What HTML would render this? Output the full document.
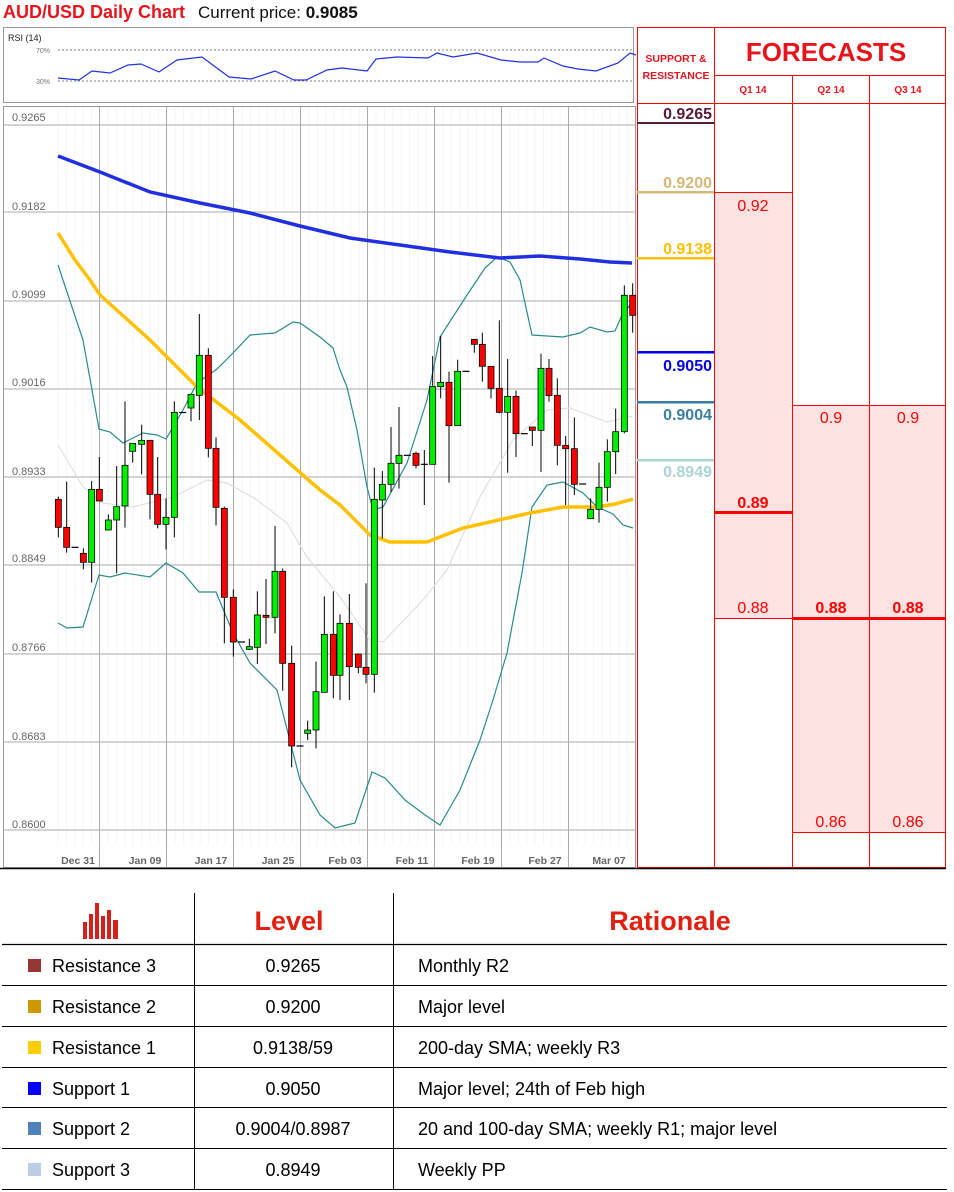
<!DOCTYPE html>
<html><head><meta charset="utf-8"><style>
html,body{margin:0;padding:0;background:#fff;width:954px;height:1192px;overflow:hidden}
svg{display:block}
text{font-family:"Liberation Sans",sans-serif}
</style></head><body>
<svg id="s" width="954" height="1192" xmlns="http://www.w3.org/2000/svg">
<text x="3" y="18" font-size="18" font-weight="bold" fill="#e8141c">AUD/USD Daily Chart</text>
<text x="198" y="18" font-size="17" fill="#111">Current price: <tspan font-weight="bold">0.9085</tspan></text>

<rect x="3.5" y="27.5" width="630" height="75" fill="#fff" stroke="#999"/>
<text x="8" y="41" font-size="9" fill="#222">RSI (14)</text>
<text x="36" y="53" font-size="7" fill="#777">70%</text>
<text x="36" y="84" font-size="7" fill="#777">30%</text>
<line x1="58" y1="50" x2="634" y2="50" stroke="#555" stroke-dasharray="2,2" stroke-width="0.8"/>
<line x1="58" y1="81" x2="634" y2="81" stroke="#555" stroke-dasharray="2,2" stroke-width="0.8"/>
<polyline fill="none" stroke="#2030e0" stroke-width="1.2" points="58,78 79,80 92,71 110,73 128,65 141,64 159,72 177,60 202,57 229,77 251,79 275,71 294,80 306,80 327,70 342,68 367,71 376,59 397,57 428,58 437,53 453,57 477,53 501,60 520,62 538,62 544,58 563,66 578,69 596,71 618,63 630,53 636,55"/>

<rect x="3.5" y="106.5" width="632" height="761" fill="#fff" stroke="#999"/>
<g id="minor"></g>
<g stroke="#aaa" stroke-width="1">
<line x1="3" y1="125" x2="635" y2="125"/><line x1="3" y1="212" x2="635" y2="212"/><line x1="3" y1="301" x2="635" y2="301"/><line x1="3" y1="389" x2="635" y2="389"/><line x1="3" y1="477" x2="635" y2="477"/><line x1="3" y1="565" x2="635" y2="565"/><line x1="3" y1="654" x2="635" y2="654"/><line x1="3" y1="742" x2="635" y2="742"/><line x1="3" y1="830" x2="635" y2="830"/>
<line x1="99.5" y1="107" x2="99.5" y2="868"/><line x1="166.5" y1="107" x2="166.5" y2="868"/><line x1="233.5" y1="107" x2="233.5" y2="868"/><line x1="300.5" y1="107" x2="300.5" y2="868"/><line x1="367.5" y1="107" x2="367.5" y2="868"/><line x1="434.5" y1="107" x2="434.5" y2="868"/><line x1="501.5" y1="107" x2="501.5" y2="868"/><line x1="568.5" y1="107" x2="568.5" y2="868"/>
</g>
<g font-size="11" fill="#666">
<text x="12" y="121">0.9265</text><text x="12" y="210">0.9182</text><text x="12" y="298">0.9099</text><text x="12" y="386">0.9016</text><text x="12" y="475">0.8933</text><text x="12" y="562">0.8849</text><text x="12" y="651">0.8766</text><text x="12" y="740">0.8683</text><text x="12" y="828">0.8600</text>
</g>
<g font-size="10.5" font-weight="bold" fill="#666" text-anchor="middle">
<text x="78" y="864">Dec 31</text><text x="145" y="864">Jan 09</text><text x="211" y="864">Jan 17</text><text x="278" y="864">Jan 25</text><text x="345" y="864">Feb 03</text><text x="412" y="864">Feb 11</text><text x="478" y="864">Feb 19</text><text x="545" y="864">Feb 27</text><text x="609" y="864">Mar 07</text>
</g>
<polyline fill="none" stroke="#e0e0e0" stroke-width="1.2" points="58,445 83,487 103,503 133,507 173,497 207,480 227,483 257,500 287,523 307,557 340,597 370,640 383,642 423,600 447,570 480,497 513,440 547,410 570,408 607,422 633,416"/>
<polyline fill="none" stroke="#2a8a8a" stroke-width="1.2" points="58,265 63,280 83,340 92,390 99,429 110,432 123,443 143,433 157,435 166,439 183,410 197,383 217,369 233,353 250,335 275,333 293,322 300,323 320,337 333,348 340,370 347,387 357,430 367,487 373,510 383,507 407,463 427,400 440,337 467,295 485,268 497,257 510,262 520,280 532,335 563,337 580,333 590,327 607,332 615,331 623,313 633,302"/>
<polyline fill="none" stroke="#2a8a8a" stroke-width="1.2" points="58,623 67,628 83,627 99,575 110,577 125,573 150,577 166,563 183,573 199,592 216,592 233,633 250,663 277,690 300,780 320,815 335,828 355,823 372,772 385,778 405,800 425,815 440,825 460,790 480,740 493,700 507,653 522,573 532,507 547,485 563,482 583,493 597,507 613,514 623,525 633,528"/>
<polyline fill="none" stroke="#2030e0" stroke-width="3.5" points="58,156 100,172 150,192 200,203 250,213 300,226 350,238 400,245 450,252 500,258 540,256 580,259 610,262 632,263"/>
<polyline fill="none" stroke="#ffc000" stroke-width="3.5" points="58,233 75,260 90,280 100,295 150,340 197,387 240,420 280,455 320,490 340,505 370,535 390,542 427,542 463,528 530,513 563,507 597,507 615,504 633,499"/>
<g id="candles"></g>

<rect x="714" y="192" width="78" height="426" fill="#fde2e2"/>
<rect x="792" y="405" width="154" height="427" fill="#fde2e2"/>
<g stroke="#ff0000" stroke-width="1">
<rect x="637.5" y="27.5" width="308" height="840" fill="none"/>
<line x1="714.5" y1="27" x2="714.5" y2="868"/>
<line x1="792.5" y1="75" x2="792.5" y2="868"/>
<line x1="869.5" y1="75" x2="869.5" y2="868"/>
<line x1="714" y1="75.5" x2="946" y2="75.5"/>
<line x1="637" y1="103.5" x2="946" y2="103.5"/>
<line x1="714" y1="192.5" x2="792" y2="192.5"/>
<line x1="792" y1="405.5" x2="946" y2="405.5"/>
<line x1="714" y1="618.5" x2="792" y2="618.5"/>
<line x1="792" y1="832.5" x2="946" y2="832.5"/>
</g>
<rect x="714" y="511" width="78" height="3" fill="#ff0000"/>
<rect x="792" y="617" width="154" height="3" fill="#ff0000"/>
<g fill="#e8141c" font-weight="bold" text-anchor="middle">
<text x="676" y="62" font-size="10.5">SUPPORT &amp;</text>
<text x="676" y="79" font-size="10.5">RESISTANCE</text>
<text x="826" y="61" font-size="26">FORECASTS</text>
<text x="753" y="93" font-size="10">Q1 14</text><text x="831" y="93" font-size="10">Q2 14</text><text x="908" y="93" font-size="10">Q3 14</text>
</g>
<g font-size="16" font-weight="bold" text-anchor="end">
<text x="712" y="119" fill="#5a1a3a">0.9265</text>
<text x="712" y="188" fill="#d8b878">0.9200</text>
<text x="712" y="254" fill="#ffc000">0.9138</text>
<text x="712" y="371" fill="#0000ee">0.9050</text>
<text x="712" y="420" fill="#3a7fa0">0.9004</text>
<text x="712" y="477" fill="#aad4d4">0.8949</text>
</g>
<rect x="637" y="122" width="77" height="2" fill="#5a1a3a"/>
<rect x="637" y="191" width="77" height="2.5" fill="#d8b878"/>
<rect x="637" y="257" width="77" height="2.5" fill="#ffc000"/>
<rect x="637" y="351" width="77" height="2.5" fill="#0000ee"/>
<rect x="637" y="401" width="77" height="2.5" fill="#3a7fa0"/>
<rect x="637" y="459" width="77" height="2.5" fill="#aad4d4"/>
<g font-size="16" fill="#ff0000" text-anchor="middle">
<text x="753" y="211">0.92</text>
<text x="753" y="508" font-weight="bold">0.89</text>
<text x="753" y="613">0.88</text>
<text x="831" y="423">0.9</text><text x="908" y="423">0.9</text>
<text x="831" y="613" font-weight="bold">0.88</text><text x="908" y="613" font-weight="bold">0.88</text>
<text x="831" y="827">0.86</text><text x="908" y="827">0.86</text>
</g>
<line x1="0" y1="868.5" x2="946" y2="868.5" stroke="#000" stroke-width="1.5"/>

<g fill="#d8201a">
<rect x="83" y="922" width="4" height="17"/><rect x="89" y="914" width="4" height="25"/><rect x="95" y="903" width="4" height="36"/><rect x="101" y="916" width="4" height="23"/><rect x="107" y="910" width="4" height="29"/><rect x="113" y="920" width="5" height="19"/>
</g>
<text x="289" y="930" font-size="27" font-weight="bold" fill="#e02010" text-anchor="middle">Level</text>
<text x="670" y="930" font-size="27" font-weight="bold" fill="#e02010" text-anchor="middle">Rationale</text>
<g stroke="#000" stroke-width="1">
<line x1="194.5" y1="893" x2="194.5" y2="1189"/>
<line x1="393.5" y1="893" x2="393.5" y2="1189"/>
<line x1="2" y1="944.5" x2="947" y2="944.5" stroke-width="1.3"/>
<line x1="2" y1="985.5" x2="947" y2="985.5"/>
<line x1="2" y1="1026.5" x2="947" y2="1026.5"/>
<line x1="2" y1="1067.5" x2="947" y2="1067.5"/>
<line x1="2" y1="1107.5" x2="947" y2="1107.5"/>
<line x1="2" y1="1148.5" x2="947" y2="1148.5"/>
<line x1="2" y1="1189.5" x2="947" y2="1189.5"/>
</g>
<rect x="28" y="959" width="13" height="13" fill="#953735"/>
<rect x="28" y="1000" width="13" height="13" fill="#cc9900"/>
<rect x="28" y="1041" width="13" height="13" fill="#ffcc00"/>
<rect x="28" y="1082" width="13" height="13" fill="#0000ff"/>
<rect x="28" y="1122" width="13" height="13" fill="#4f81bd"/>
<rect x="28" y="1163" width="13" height="13" fill="#b9cde5"/>
<g font-size="18" fill="#000">
<text x="52" y="972">Resistance 3</text><text x="52" y="1013">Resistance 2</text><text x="52" y="1054">Resistance 1</text><text x="52" y="1095">Support 1</text><text x="52" y="1135">Support 2</text><text x="52" y="1176">Support 3</text>
<text x="418" y="972">Monthly R2</text><text x="418" y="1013">Major level</text><text x="418" y="1054">200-day SMA; weekly R3</text><text x="418" y="1095">Major level; 24th of Feb high</text><text x="418" y="1135">20 and 100-day SMA; weekly R1; major level</text><text x="418" y="1176">Weekly PP</text>
</g>
<g font-size="18" fill="#000" text-anchor="middle">
<text x="293" y="972">0.9265</text><text x="293" y="1013">0.9200</text><text x="293" y="1054">0.9138/59</text><text x="293" y="1095">0.9050</text><text x="293" y="1135">0.9004/0.8987</text><text x="293" y="1176">0.8949</text>
</g>
</svg>
<script>
(function(){
var NS="http://www.w3.org/2000/svg";
var minor=document.getElementById("minor");
for(var x=58;x<634;x+=8.37){var l=document.createElementNS(NS,"line");l.setAttribute("x1",x);l.setAttribute("x2",x);l.setAttribute("y1",107);l.setAttribute("y2",845);l.setAttribute("stroke","#f5f5f5");minor.appendChild(l);}
var A=[[55,658,742,650,772,'r'],[80,742,802,605,818,'r'],[105,800,804,0,0,'d'],[130,820,847,805,868,'r'],[155,628,847,603,908,'g'],[178,628,663,531,663,'r'],[205,720,750,703,750,'g'],[230,680,720,558,880,'g'],[255,556,678,364,742,'g'],[278,490,514,490,548,'g'],[305,481,493,434,583,'g'],[330,481,643,481,718,'r'],[353,643,733,531,745,'r'],[378,712,733,655,808,'g'],[403,397,712,364,772,'g'],[428,396,399,0,0,'d'],[453,343,384,343,424,'g'],[478,226,346,102,420,'g'],[505,226,505,205,532,'r'],[528,505,682,472,736,'r'],[553,685,952,680,1090,'r'],[580,952,1086,928,1130,'r'],[605,1084,1088,0,0,'d'],[628,1100,1108,1076,1110,'g'],[652,1005,1102,934,1152,'g'],[678,1006,1012,897,1092,'r'],[705,874,1012,738,1060,'g'],[728,874,1150,866,1232,'r'],[755,1150,1398,1097,1462,'r'],[780,1396,1400,0,0,'d'],[803,1350,1360,1322,1380,'g'],[828,1235,1350,1145,1405,'g'],[853,1063,1237,949,1237,'g'],[880,1063,1186,934,1255,'r']];
var B=[[30,1030,1186,1003,1260,'g'],[58,1030,1160,942,1260,'r'],[85,1122,1162,1122,1180,'r'],[108,1162,1183,910,1210,'r'],[133,658,1183,563,1238,'g'],[157,613,660,573,775,'g'],[183,550,613,441,636,'g'],[207,526,550,381,626,'g'],[232,524,528,0,0,'d'],[258,520,556,515,565,'r'],[283,551,555,510,675,'d'],[308,320,553,228,553,'g'],[332,307,320,168,355,'g'],[357,307,437,275,608,'r'],[383,274,437,239,437,'g'],[408,272,276,0,0,'d'],[433,178,193,178,218,'r'],[457,193,259,158,305,'r'],[483,259,325,259,355,'r'],[508,325,397,121,400,'r'],[533,349,397,237,578,'g'],[558,349,461,332,531,'r'],[583,459,463,0,0,'d'],[607,441,451,441,498,'r'],[633,265,451,221,576,'g'],[657,265,347,237,365,'r'],[682,346,496,295,556,'r'],[707,496,506,468,675,'r'],[733,506,613,412,645,'r'],[758,610,614,0,0,'d'],[782,688,716,655,716,'g'],[807,622,688,548,728,'g'],[832,515,622,478,665,'g'],[857,455,515,386,582,'g'],[883,46,455,16,460,'g'],[908,46,106,10,158,'r']];
var g=document.getElementById("candles");
function add(list,ox,oy){list.forEach(function(c){
var x=ox+c[0]/3,t=oy+c[1]/3,b=oy+c[2]/3,h=oy+c[3]/3,lo=oy+c[4]/3;
if(c[4]>0){var w=document.createElementNS(NS,"line");w.setAttribute("x1",x);w.setAttribute("x2",x);w.setAttribute("y1",h);w.setAttribute("y2",lo);w.setAttribute("stroke","#000");w.setAttribute("stroke-width","1");g.appendChild(w);}
if(c[5]=='d'){var d=document.createElementNS(NS,"line");d.setAttribute("x1",x-3.5);d.setAttribute("x2",x+3.5);d.setAttribute("y1",(t+b)/2);d.setAttribute("y2",(t+b)/2);d.setAttribute("stroke","#000");d.setAttribute("stroke-width","1.2");g.appendChild(d);return;}
var r=document.createElementNS(NS,"rect");r.setAttribute("x",x-3);r.setAttribute("y",t);r.setAttribute("width",6);r.setAttribute("height",Math.max(1.5,b-t));r.setAttribute("fill",c[5]=='g'?"#00ee00":"#ff0000");r.setAttribute("stroke","#000");r.setAttribute("stroke-width","0.8");g.appendChild(r);
});}
add(A,40,280);add(B,330,280);
})();
</script>
</body></html>
